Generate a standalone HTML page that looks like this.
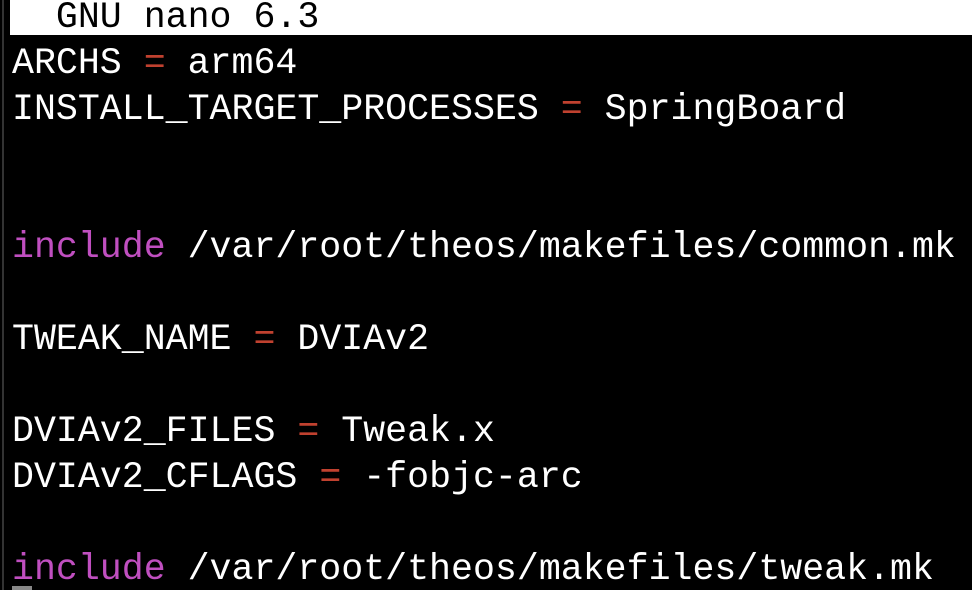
<!DOCTYPE html>
<html><head><style>
html,body{margin:0;padding:0;background:#000;width:972px;height:590px;overflow:hidden}
body{position:relative;font-family:"Liberation Mono",monospace;font-size:36.6px;color:#fff}
.hdr{position:absolute;left:10px;top:0;width:962px;height:35px;background:#fff;color:#000;line-height:35px;white-space:pre}
.hdr span{position:relative;left:2px;top:0px}
.edge{position:absolute;left:2px;top:0;width:2px;height:590px;background:#333}
.txt{position:absolute;left:12px;top:41px;line-height:46px;white-space:pre}
.r{color:#c0412f}
.m{color:#c04fc0}
.cur{position:absolute;left:12px;top:586px;width:20px;height:4px;background:#888}
</style></head><body>
<div class="edge"></div>
<div class="hdr"><span>  GNU nano 6.3</span></div>
<div class="txt">ARCHS <span class="r">=</span> arm64
INSTALL_TARGET_PROCESSES <span class="r">=</span> SpringBoard


<span class="m">include</span> /var/root/theos/makefiles/common.mk

TWEAK_NAME <span class="r">=</span> DVIAv2

DVIAv2_FILES <span class="r">=</span> Tweak.x
DVIAv2_CFLAGS <span class="r">=</span> -fobjc-arc

<span class="m">include</span> /var/root/theos/makefiles/tweak.mk</div>
<div class="cur"></div>
</body></html>
